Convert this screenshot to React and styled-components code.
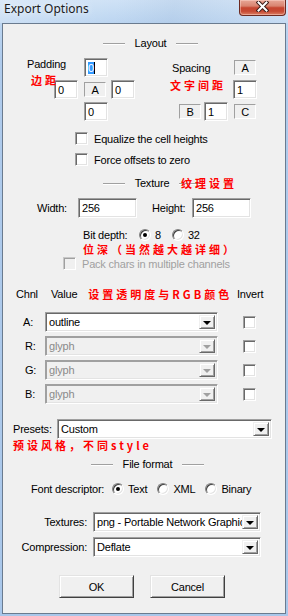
import React from 'react';
import styled, { createGlobalStyle } from 'styled-components';

const GlobalStyle = createGlobalStyle`
  html, body { margin: 0; padding: 0; }
  body {
    width: 288px;
    height: 616px;
    overflow: hidden;
    font-family: "Liberation Sans", Arial, sans-serif;
    font-size: 11px;
    letter-spacing: -0.2px;
    color: #000;
  }
`;

const Frame = styled.div`
  width: 288px;
  height: 616px;
  display: flex;
  flex-direction: column;
  box-sizing: border-box;
  background: linear-gradient(180deg, #cfe2f6 0px, #bdd6f1 22px, #afcbec 60px, #a9c7ea 100%);
`;

const TitleBar = styled.div`
  height: 23px;
  display: flex;
  align-items: flex-start;
  flex-shrink: 0;
  background: linear-gradient(100deg, rgba(255,255,255,0.25) 0%, rgba(255,255,255,0) 40%, rgba(120,150,190,0.12) 60%, rgba(255,255,255,0.15) 100%);
`;

const Title = styled.div`
  padding: 1px 0 0 4px;
  font-family: "Noto Sans", "Open Sans", sans-serif;
  font-size: 12px;
  line-height: 16px;
  letter-spacing: 0;
  color: #1b1b1b;
  text-shadow: 0 0 6px rgba(255, 255, 255, 0.9);
`;

const CloseButton = styled.div`
  margin-left: auto;
  margin-right: 2px;
  width: 47px;
  height: 16px;
  box-sizing: border-box;
  border: 1px solid #6d2a20;
  border-top: none;
  border-radius: 0 0 4px 4px;
  background: linear-gradient(180deg, #e8a797 0%, #d98470 40%, #c6452f 52%, #c64a34 75%, #dc8064 100%);
  box-shadow: inset 0 0 0 1px rgba(255, 220, 210, 0.45);
  display: flex;
  justify-content: center;
  padding-top: 1px;
`;

const Client = styled.div`
  flex: 1;
  margin: 0 2px 2px 2px;
  border: 1px solid #6a7b8f;
  background: #f0f0f0;
  display: flex;
  flex-direction: column;
  position: relative;
`;

const GroupHeader = styled.div`
  position: relative;
  display: flex;
  align-items: center;
  justify-content: center;
  gap: 10px;
  height: 14px;
  margin-top: ${p => p.$mt}px;
  padding-left: ${p => p.$shift}px;
`;

const Etch = styled.span`
  width: 22px;
  height: 1px;
  background: #a0a0a0;
  box-shadow: 0 1px 0 #fff;
`;

const Note = styled.div`
  font-family: "Noto Sans CJK SC", "Noto Sans", sans-serif;
  font-weight: 700;
  font-size: 11px;
  line-height: 12px;
  letter-spacing: 3px;
  color: #ff0000;
  white-space: nowrap;
`;

const OverNote = styled(Note)`
  position: absolute;
  left: ${p => p.$x}px;
  top: ${p => p.$y}px;
`;

const NoteLine = styled(Note)`
  height: 12px;
  margin-top: ${p => p.$mt || 0}px;
  padding-left: ${p => p.$pl}px;
`;

const LayoutGrid = styled.div`
  position: relative;
  display: grid;
  grid-template-columns: 27px 30px 27px 24px 37px 32px 29px 24px;
  grid-template-rows: repeat(3, 19px);
  row-gap: 3px;
  margin: 8px 0 0 24px;
  align-items: center;
`;

const Cell = styled.div`
  grid-column: ${p => p.$c};
  grid-row: ${p => p.$r};
  justify-self: ${p => p.$js || 'start'};
  align-self: ${p => p.$as || 'center'};
  margin-right: ${p => p.$mr || 0}px;
  white-space: nowrap;
`;

const TextBox = styled.div`
  width: ${p => p.$w}px;
  height: ${p => p.$h || 19}px;
  box-sizing: border-box;
  border: 1px solid;
  border-color: #a0a0a0 #fff #fff #a0a0a0;
  box-shadow: inset 1px 1px 0 #696969, inset -1px -1px 0 #e3e3e3;
  background: #fff;
  padding: 0 3px;
  display: flex;
  align-items: center;
  white-space: nowrap;
`;

const Selected = styled.span`
  background: #3399ff;
  color: #fff;
  border-right: 1px solid #000;
`;

const StaticBox = styled.div`
  width: 22px;
  height: 15px;
  box-sizing: border-box;
  border: 1px solid;
  border-color: #a0a0a0 #fff #fff #a0a0a0;
  display: flex;
  align-items: center;
  justify-content: center;
`;

const CheckList = styled.div`
  display: flex;
  flex-direction: column;
  gap: 8px;
  margin: ${p => p.$mt}px 0 0 ${p => p.$pl}px;
`;

const CheckRow = styled.div`
  display: flex;
  align-items: center;
  gap: 6px;
  height: 13px;
  white-space: nowrap;
  color: ${p => (p.$disabled ? '#a0a0a0' : '#000')};
`;

const CheckBox = styled.span`
  display: block;
  flex-shrink: 0;
  width: 13px;
  height: 13px;
  box-sizing: border-box;
  border: 1px solid;
  border-color: ${p => (p.$disabled ? '#c8c8c8 #fff #fff #c8c8c8' : '#a0a0a0 #fff #fff #a0a0a0')};
  box-shadow: ${p => (p.$disabled ? 'inset 1px 1px 0 #a0a0a0' : 'inset 1px 1px 0 #696969, inset -1px -1px 0 #e3e3e3')};
  background: ${p => (p.$disabled ? '#f0f0f0' : '#fff')};
  margin-left: ${p => p.$ml || 0}px;
`;

const Row = styled.div`
  display: flex;
  align-items: center;
  height: ${p => p.$h}px;
  margin-top: ${p => p.$mt}px;
  padding-left: ${p => p.$pl}px;
  white-space: nowrap;
`;

const Label = styled.span`
  width: ${p => p.$w}px;
  flex-shrink: 0;
`;

const Spacer = styled.span`
  width: ${p => p.$w}px;
  flex-shrink: 0;
`;

const RadioOpt = styled.span`
  display: flex;
  align-items: center;
  gap: 4px;
  margin-right: ${p => p.$mr || 0}px;
`;

const RadioDot = styled.span`
  width: 12px;
  height: 12px;
  box-sizing: border-box;
  border-radius: 50%;
  border: 1px solid;
  border-color: #808080 #fff #fff #808080;
  box-shadow: inset 1px 1px 0 #404040, inset -1px -1px 0 #e3e3e3;
  background: #fff;
  display: flex;
  align-items: center;
  justify-content: center;
  &::after {
    content: '';
    width: 4px;
    height: 4px;
    border-radius: 50%;
    background: ${p => (p.$on ? '#000' : 'transparent')};
  }
`;

const ChannelGrid = styled.div`
  display: grid;
  grid-template-columns: 29px 173px 19px 30px;
  grid-template-rows: 21px repeat(4, 20px);
  row-gap: 4px;
  margin: 17px 0 0 13px;
  align-items: center;
`;

const HeadCell = styled.div`
  grid-column: ${p => p.$c};
  align-self: start;
  height: 14px;
  display: flex;
  align-items: center;
  gap: 11px;
  padding-left: ${p => p.$pl || 0}px;
  white-space: nowrap;
`;

const ChLabel = styled.div`
  padding-left: ${p => p.$pl}px;
`;

const SelectBox = styled.div`
  width: ${p => p.$w}px;
  height: 20px;
  box-sizing: border-box;
  border: 1px solid;
  border-color: ${p => (p.$disabled ? '#a0a0a0 #fff #fff #a0a0a0' : '#a0a0a0 #fff #fff #a0a0a0')};
  box-shadow: ${p => (p.$disabled ? 'inset 1px 1px 0 #a0a0a0, inset -1px -1px 0 #e3e3e3' : 'inset 1px 1px 0 #696969, inset -1px -1px 0 #e3e3e3')};
  background: ${p => (p.$disabled ? '#f0f0f0' : '#fff')};
  padding: 2px;
  display: flex;
  align-items: stretch;
`;

const SelectText = styled.div`
  flex: 1;
  overflow: hidden;
  white-space: nowrap;
  padding-left: 1px;
  display: flex;
  align-items: center;
  color: ${p => (p.$disabled ? '#8a8a8a' : '#000')};
`;

const DropButton = styled.div`
  width: 16px;
  flex-shrink: 0;
  box-sizing: border-box;
  border: 1px solid;
  border-color: #f0f0f0 #696969 #696969 #f0f0f0;
  box-shadow: inset 1px 1px 0 #fff, inset -1px -1px 0 #a0a0a0;
  background: #f0f0f0;
  display: flex;
  align-items: center;
  justify-content: center;
  &::after {
    content: '';
    border-left: 4px solid transparent;
    border-right: 4px solid transparent;
    border-top: 4px solid ${p => (p.$disabled ? '#a0a0a0' : '#000')};
    margin-top: 1px;
  }
`;

const FormatGrid = styled.div`
  display: grid;
  grid-template-columns: 81px 168px;
  grid-template-rows: repeat(2, 20px);
  column-gap: 6px;
  row-gap: 5px;
  margin: 16px 0 0 3px;
  align-items: center;
`;

const RightLabel = styled.div`
  justify-self: end;
  white-space: nowrap;
`;

const ButtonRow = styled.div`
  display: flex;
  gap: 16px;
  margin: 18px 0 0 56px;
`;

const Button = styled.div`
  width: 75px;
  height: 23px;
  box-sizing: border-box;
  border: 1px solid;
  border-color: #e3e3e3 #404040 #404040 #e3e3e3;
  box-shadow: inset 1px 1px 0 #fff, inset -1px -1px 0 #a0a0a0;
  background: #f0f0f0;
  display: flex;
  align-items: center;
  justify-content: center;
`;

const Select = ({ w, disabled, children }) => (
  <SelectBox $w={w} $disabled={disabled}>
    <SelectText $disabled={disabled}>{children}</SelectText>
    <DropButton $disabled={disabled} />
  </SelectBox>
);

const Radio = ({ on, children, mr }) => (
  <RadioOpt $mr={mr}>
    <RadioDot $on={on} />
    {children}
  </RadioOpt>
);

const channels = [
  { ch: 'A:', value: 'outline', disabled: false, pl: 7 },
  { ch: 'R:', value: 'glyph', disabled: true, pl: 9 },
  { ch: 'G:', value: 'glyph', disabled: true, pl: 9 },
  { ch: 'B:', value: 'glyph', disabled: true, pl: 9 },
];

export default function App() {
  return (
    <>
      <GlobalStyle />
      <Frame>
        <TitleBar>
          <Title>Export Options</Title>
          <CloseButton>
            <svg width="13" height="11" viewBox="0 0 13 11">
              <path d="M2.5 1.5 L10.5 9.5 M10.5 1.5 L2.5 9.5" stroke="#3b1c18" strokeWidth="4" strokeLinecap="square" />
              <path d="M2.5 1.5 L10.5 9.5 M10.5 1.5 L2.5 9.5" stroke="#fff" strokeWidth="2" strokeLinecap="square" />
            </svg>
          </CloseButton>
        </TitleBar>
        <Client>
          <GroupHeader $mt={12} $shift={13}>
            <Etch />
            <span>Layout</span>
            <Etch />
          </GroupHeader>

          <LayoutGrid>
            <Cell $c="1 / 3" $r="1" $as="start">Padding</Cell>
            <Cell $c="3" $r="1"><TextBox $w={24}><Selected>0</Selected></TextBox></Cell>
            <Cell $c="2" $r="2"><TextBox $w={24}>0</TextBox></Cell>
            <Cell $c="3" $r="2"><StaticBox>A</StaticBox></Cell>
            <Cell $c="4" $r="2"><TextBox $w={24}>0</TextBox></Cell>
            <Cell $c="3" $r="3"><TextBox $w={24}>0</TextBox></Cell>

            <Cell $c="6 / 8" $r="1">Spacing</Cell>
            <Cell $c="8" $r="1" $js="center"><StaticBox>A</StaticBox></Cell>
            <Cell $c="8" $r="2"><TextBox $w={24}>1</TextBox></Cell>
            <Cell $c="6" $r="3" $js="end" $mr={3}><StaticBox>B</StaticBox></Cell>
            <Cell $c="7" $r="3"><TextBox $w={24}>1</TextBox></Cell>
            <Cell $c="8" $r="3" $js="center"><StaticBox>C</StaticBox></Cell>

            <OverNote $x={4} $y={16}>边距</OverNote>
            <OverNote $x={143} $y={21}>文字间距</OverNote>
          </LayoutGrid>

          <CheckList $mt={11} $pl={72}>
            <CheckRow><CheckBox />Equalize the cell heights</CheckRow>
            <CheckRow><CheckBox />Force offsets to zero</CheckRow>
          </CheckList>

          <GroupHeader $mt={10} $shift={16}>
            <Etch />
            <span>Texture</span>
            <Etch />
            <OverNote $x={178} $y={1}>纹理设置</OverNote>
          </GroupHeader>

          <Row $h={20} $mt={8} $pl={34}>
            <Label $w={41}>Width:</Label>
            <TextBox $w={59} $h={20}>256</TextBox>
            <Spacer $w={15} />
            <Label $w={40}>Height:</Label>
            <TextBox $w={59} $h={20}>256</TextBox>
          </Row>

          <Row $h={14} $mt={10} $pl={80}>
            <Label $w={56}>Bit depth:</Label>
            <Radio on mr={11}>8</Radio>
            <Radio>32</Radio>
          </Row>

          <NoteLine $mt={1} $pl={80}>位深（当然越大越详细）</NoteLine>

          <CheckList $mt={2} $pl={60}>
            <CheckRow $disabled><CheckBox $disabled />Pack chars in multiple channels</CheckRow>
          </CheckList>

          <ChannelGrid>
            <HeadCell $c="1">Chnl</HeadCell>
            <HeadCell $c="2" $pl={6}>
              <span>Value</span>
              <Note>设置透明度与RGB颜色</Note>
            </HeadCell>
            <HeadCell $c="4">Invert</HeadCell>
            {channels.map(c => (
              <React.Fragment key={c.ch}>
                <ChLabel $pl={c.pl}>{c.ch}</ChLabel>
                <Select w={173} disabled={c.disabled}>{c.value}</Select>
                <span />
                <CheckBox $ml={6} />
              </React.Fragment>
            ))}
          </ChannelGrid>

          <Row $h={20} $mt={15} $pl={10}>
            <Label $w={44}>Presets:</Label>
            <Select w={215}>Custom</Select>
          </Row>
          <NoteLine $pl={10}>预设风格，不同style</NoteLine>

          <GroupHeader $mt={6} $shift={7}>
            <Etch />
            <span>File format</span>
            <Etch />
          </GroupHeader>

          <Row $h={14} $mt={11} $pl={28}>
            <Label $w={81}>Font descriptor:</Label>
            <Radio on mr={10}>Text</Radio>
            <Radio mr={10}>XML</Radio>
            <Radio>Binary</Radio>
          </Row>

          <FormatGrid>
            <RightLabel>Textures:</RightLabel>
            <Select w={168}>png - Portable Network Graphics</Select>
            <RightLabel>Compression:</RightLabel>
            <Select w={168}>Deflate</Select>
          </FormatGrid>

          <ButtonRow>
            <Button>OK</Button>
            <Button>Cancel</Button>
          </ButtonRow>
        </Client>
      </Frame>
    </>
  );
}
